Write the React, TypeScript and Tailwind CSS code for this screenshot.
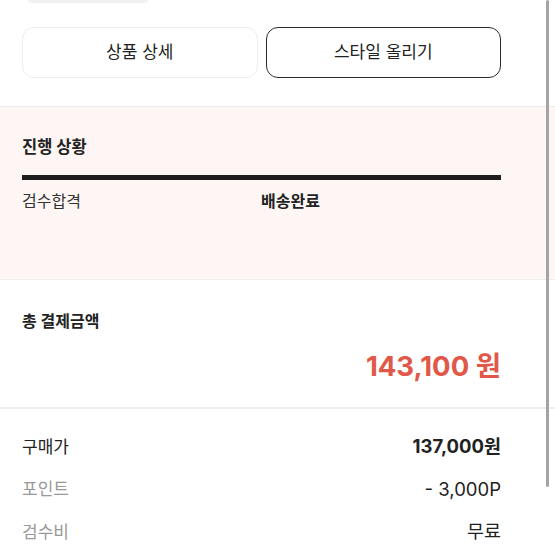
const font = { fontFamily: '"Inter", "Noto Sans CJK KR", sans-serif' };

const fees = [
  { label: "구매가", value: "137,000원", strong: true },
  { label: "포인트", value: "- 3,000P", strong: false },
  { label: "검수비", value: "무료", strong: false },
];

const App = () => {
  return (
    <div className="relative w-[555px] h-[555px] overflow-hidden bg-white text-[#222]" style={font}>
      {/* leftover of the block above */}
      <div className="h-[27px]">
        <div className="ml-[28px] w-[120px] h-[3px] rounded-b-md bg-[#f1f1f1]" />
      </div>

      {/* ACTION BUTTONS */}
      <div className="flex gap-[8px] pl-[22px] w-[501px]">
        <button className="flex-1 h-[51px] rounded-[12px] border border-[#ececec] bg-white text-[17px] text-[#222]">
          상품 상세
        </button>
        <button className="flex-1 h-[51px] rounded-[12px] border border-[#2a2a2a] bg-white text-[17px] text-[#222]">
          스타일 올리기
        </button>
      </div>

      {/* PROGRESS */}
      <div className="mt-[28px] border-t border-[#f0ecea] bg-[#fdf6f4] h-[173px] px-[22px] pt-[29px]">
        <h2 className="text-[16.5px] font-bold leading-[22px]">진행 상황</h2>
        <div className="mt-[17px] w-[479px] h-[5px] bg-[#1e1e1e]" />
        <div className="mt-[10px] flex w-[479px] text-[16px] leading-[22px]">
          <span className="w-[239px] text-[#333]">검수합격</span>
          <span className="font-bold">배송완료</span>
        </div>
      </div>

      {/* TOTAL */}
      <div className="border-t border-[#efefef] h-[128px] px-[22px] pt-[30px]">
        <h2 className="text-[16px] font-bold leading-[22px]">총 결제금액</h2>
        <div className="mt-[16px] w-[479px] text-right text-[27.5px] font-bold leading-[36px] text-[#e15849]">
          143,100 원
        </div>
      </div>

      {/* BREAKDOWN */}
      <div className="border-t-2 border-[#efefef] px-[22px] pt-[17px]">
        {fees.map((fee) => (
          <div key={fee.label} className="flex w-[479px] justify-between h-[42.5px] items-center text-[17px]">
            <span className={fee.strong ? "text-[#222]" : "text-[#999]"}>{fee.label}</span>
            <span className={fee.strong ? "text-[18.5px] font-bold text-[#222]" : "text-[18.5px] text-[#222]"}>
              {fee.value}
            </span>
          </div>
        ))}
      </div>

      {/* scrollbar */}
      <div className="absolute top-0 left-[546px] w-[3px] h-[487px] rounded-full bg-[#a4a4a4]" />
    </div>
  );
};

export default App;
